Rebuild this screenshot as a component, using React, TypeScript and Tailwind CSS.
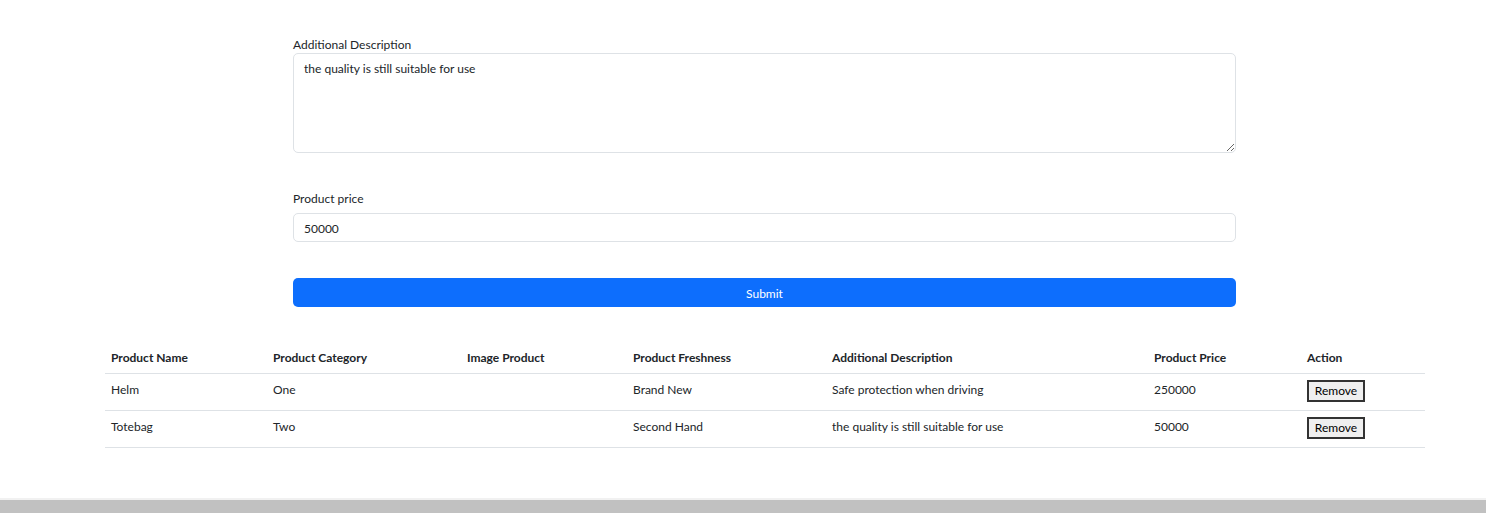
import type { FC } from 'react';

type Product = {
  name: string;
  category: string;
  freshness: string;
  description: string;
  price: string;
};

const products: Product[] = [
  { name: 'Helm', category: 'One', freshness: 'Brand New', description: 'Safe protection when driving', price: '250000' },
  { name: 'Totebag', category: 'Two', freshness: 'Second Hand', description: 'the quality is still suitable for use', price: '50000' },
];

const columns = [
  { label: 'Product Name', width: 'w-[162px]' },
  { label: 'Product Category', width: 'w-[194px]' },
  { label: 'Image Product', width: 'w-[166px]' },
  { label: 'Product Freshness', width: 'w-[199px]' },
  { label: 'Additional Description', width: 'w-[322px]' },
  { label: 'Product Price', width: 'w-[153px]' },
  { label: 'Action', width: 'w-[124px]' },
];

const ProductForm: FC = () => (
  <div className="ml-[293px] w-[943px] pt-[37px]">
    <label className="block h-[16px] text-[12px] leading-[16px]">Additional Description</label>
    <textarea
      className="block h-[100px] w-full resize-y rounded-[5px] border border-[#dee2e6] px-[10px] py-[6px] text-[12px] leading-[18px] text-[#212529] outline-none"
      defaultValue="the quality is still suitable for use"
    />

    <label className="mt-[38px] block h-[16px] text-[12px] leading-[16px]">Product price</label>
    <input
      className="mt-[6px] block h-[29px] w-full rounded-[5px] border border-[#dee2e6] px-[10px] pt-[1px] text-[12px] text-[#212529] outline-none"
      defaultValue="50000"
    />

    <button
      type="button"
      className="mt-[36px] block h-[29px] w-full rounded-[5px] bg-[#0d6efd] pt-[2px] text-[12px] text-white"
    >
      Submit
    </button>
  </div>
);

const ProductTable: FC = () => (
  <table className="mt-[32px] ml-[105px] w-[1320px] table-fixed border-collapse text-left text-[12px] text-[#212529]">
    <colgroup>
      {columns.map((c) => (
        <col key={c.label} className={c.width} />
      ))}
    </colgroup>
    <thead>
      <tr className="h-[34px] border-b border-[#dee2e6]">
        {columns.map((c) => (
          <th key={c.label} className="px-[6px] pb-[6px] align-bottom leading-[18px] font-bold">
            {c.label}
          </th>
        ))}
      </tr>
    </thead>
    <tbody>
      {products.map((p) => (
        <tr key={p.name} className="h-[37px] border-b border-[#dee2e6]">
          <td className="px-[6px] pt-[7px] align-top leading-[18px]">{p.name}</td>
          <td className="px-[6px] pt-[7px] align-top leading-[18px]">{p.category}</td>
          <td className="px-[6px] pt-[7px] align-top leading-[18px]"></td>
          <td className="px-[6px] pt-[7px] align-top leading-[18px]">{p.freshness}</td>
          <td className="px-[6px] pt-[7px] align-top leading-[18px]">{p.description}</td>
          <td className="px-[6px] pt-[7px] align-top leading-[18px]">{p.price}</td>
          <td className="px-[6px] pt-[6px] align-top">
            <button
              type="button"
              className="block h-[22px] w-[58px] border-2 border-[#333] bg-[#efefef] text-[12px] leading-[18px] text-black"
            >
              Remove
            </button>
          </td>
        </tr>
      ))}
    </tbody>
  </table>
);

export default function App() {
  return (
    <div className="min-h-screen bg-white font-['Lato','Noto_Sans',sans-serif] text-[#212529]">
      <ProductForm />
      <ProductTable />

      {/* browser scrollbar */}
      <div className="fixed right-0 bottom-0 left-0 h-[15px] bg-[#f1f1f1] pt-[2px]">
        <div className="h-[13px] bg-[#c1c1c1]" />
      </div>
    </div>
  );
}
